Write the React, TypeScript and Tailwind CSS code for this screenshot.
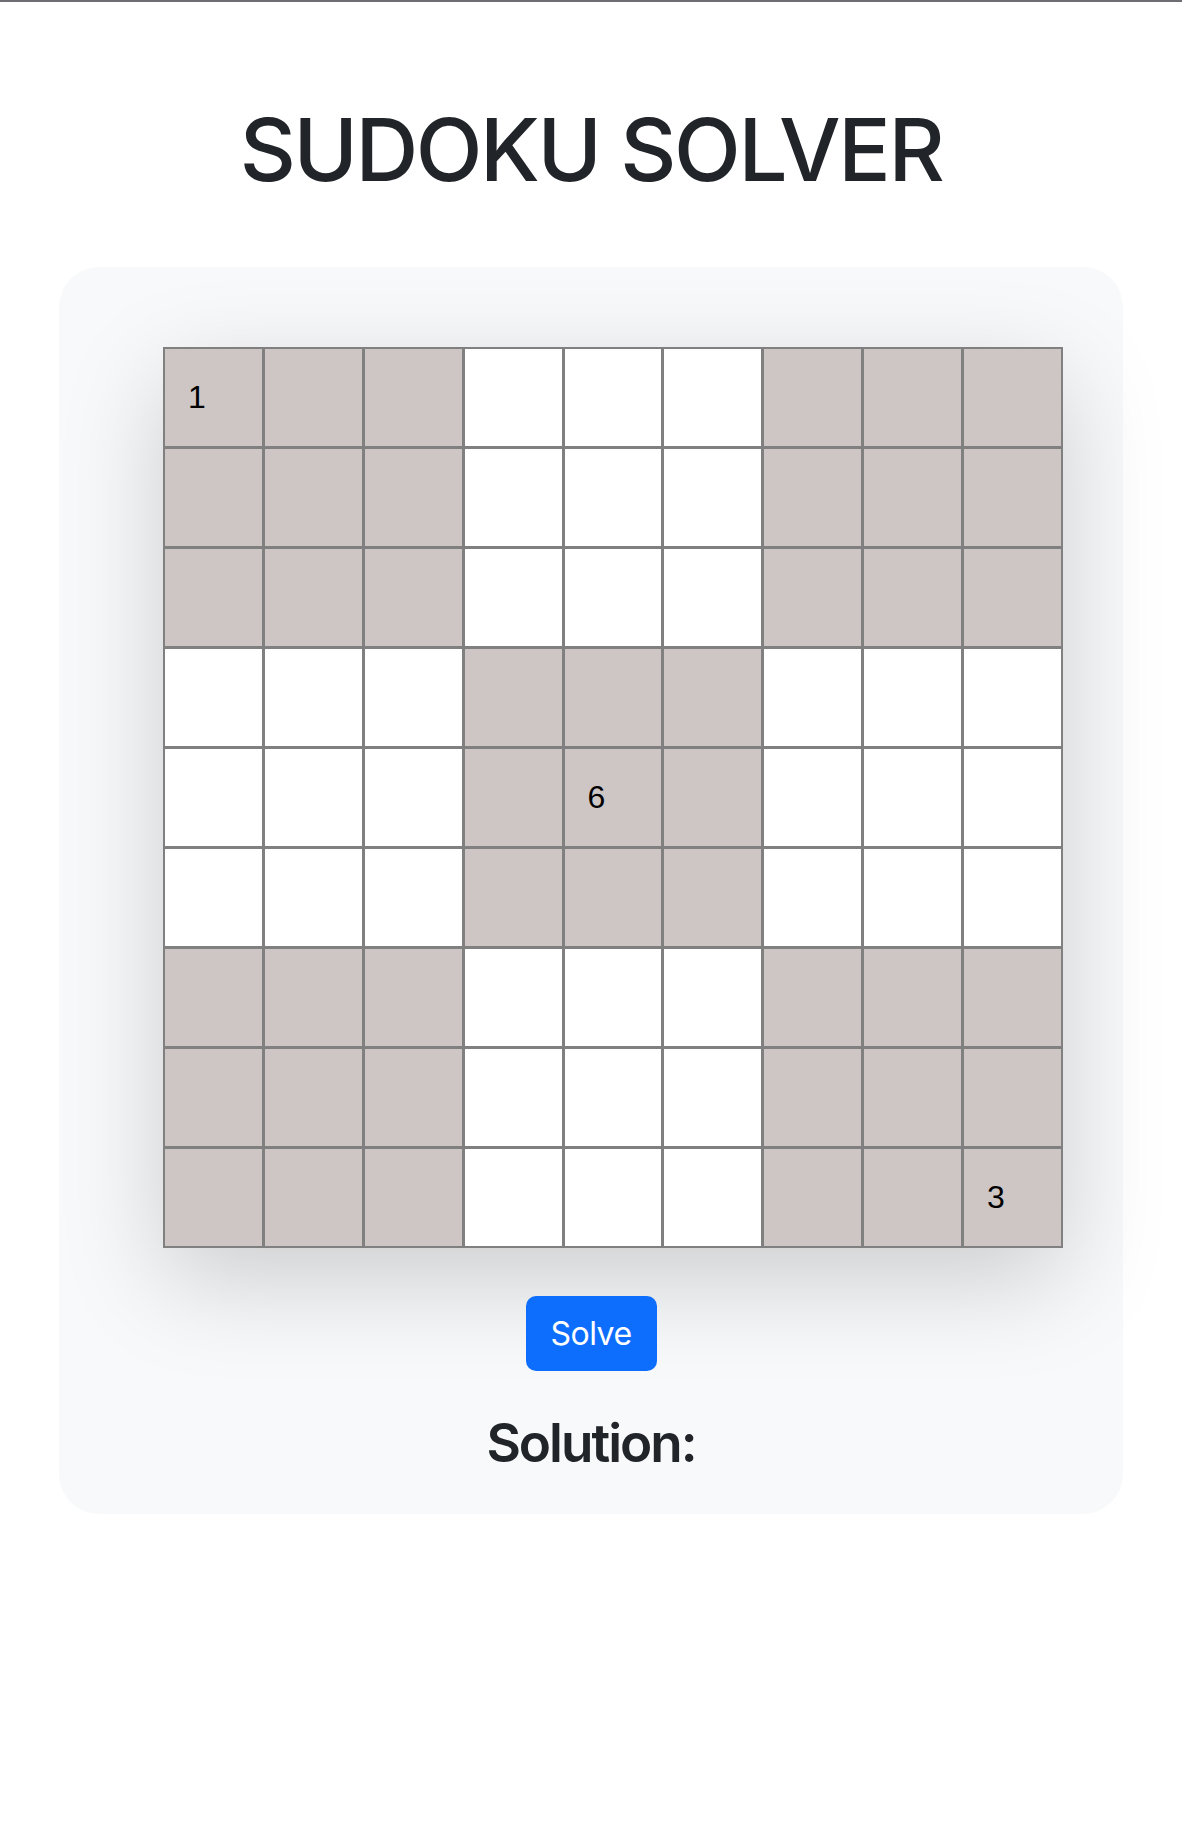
import { useState } from 'react';

const givens: Record<string, string> = {
  '0-0': '1',
  '4-4': '6',
  '8-8': '3',
};

function isShaded(row: number, col: number) {
  const box = Math.floor(row / 3) * 3 + Math.floor(col / 3);
  return box % 2 === 0;
}

export default function App() {
  const [cells, setCells] = useState<string[][]>(() =>
    Array.from({ length: 9 }, (_, r) => Array.from({ length: 9 }, (_, c) => givens[`${r}-${c}`] ?? '')),
  );

  const update = (r: number, c: number, value: string) => {
    const digit = value.replace(/[^1-9]/g, '').slice(-1);
    setCells((prev) => prev.map((row, ri) => row.map((cell, ci) => (ri === r && ci === c ? digit : cell))));
  };

  return (
    <main className="min-h-[1838px] border-t-2 border-[#6e6d72] bg-white font-['Inter',sans-serif] text-[#212529]">
      <h1 className="pt-[96px] text-center text-[87px] font-medium leading-[1.2] tracking-[-2.4px]">SUDOKU SOLVER</h1>

      <section className="mx-auto mt-[65px] flex w-[1064px] flex-col items-center rounded-[40px] bg-[#f8f9fa] pb-[38px] pt-[80px]">
        <div className="ml-[44px] grid w-[900px] grid-cols-9 gap-[3px] bg-[#808080] p-[2px] shadow-[0_32px_96px_rgba(0,0,0,0.175)]">
          {cells.map((row, r) =>
            row.map((value, c) => (
              <input
                key={`${r}-${c}`}
                value={value}
                onChange={(e) => update(r, c, e.target.value)}
                className={`h-[97px] w-full px-[23px] font-['Liberation_Sans',Arial,sans-serif] text-[32px] text-black outline-none ${
                  isShaded(r, c) ? 'bg-[#cdc6c5]' : 'bg-white'
                }`}
              />
            )),
          )}
        </div>

        <button className="mt-[48px] h-[75px] w-[131px] rounded-[10px] bg-[#0d6efd] text-[32px] tracking-[-0.5px] text-white">
          Solve
        </button>

        <h2 className="mt-[41px] text-[53px] font-semibold leading-[1.2] tracking-[-2px]">Solution:</h2>
      </section>
    </main>
  );
}
